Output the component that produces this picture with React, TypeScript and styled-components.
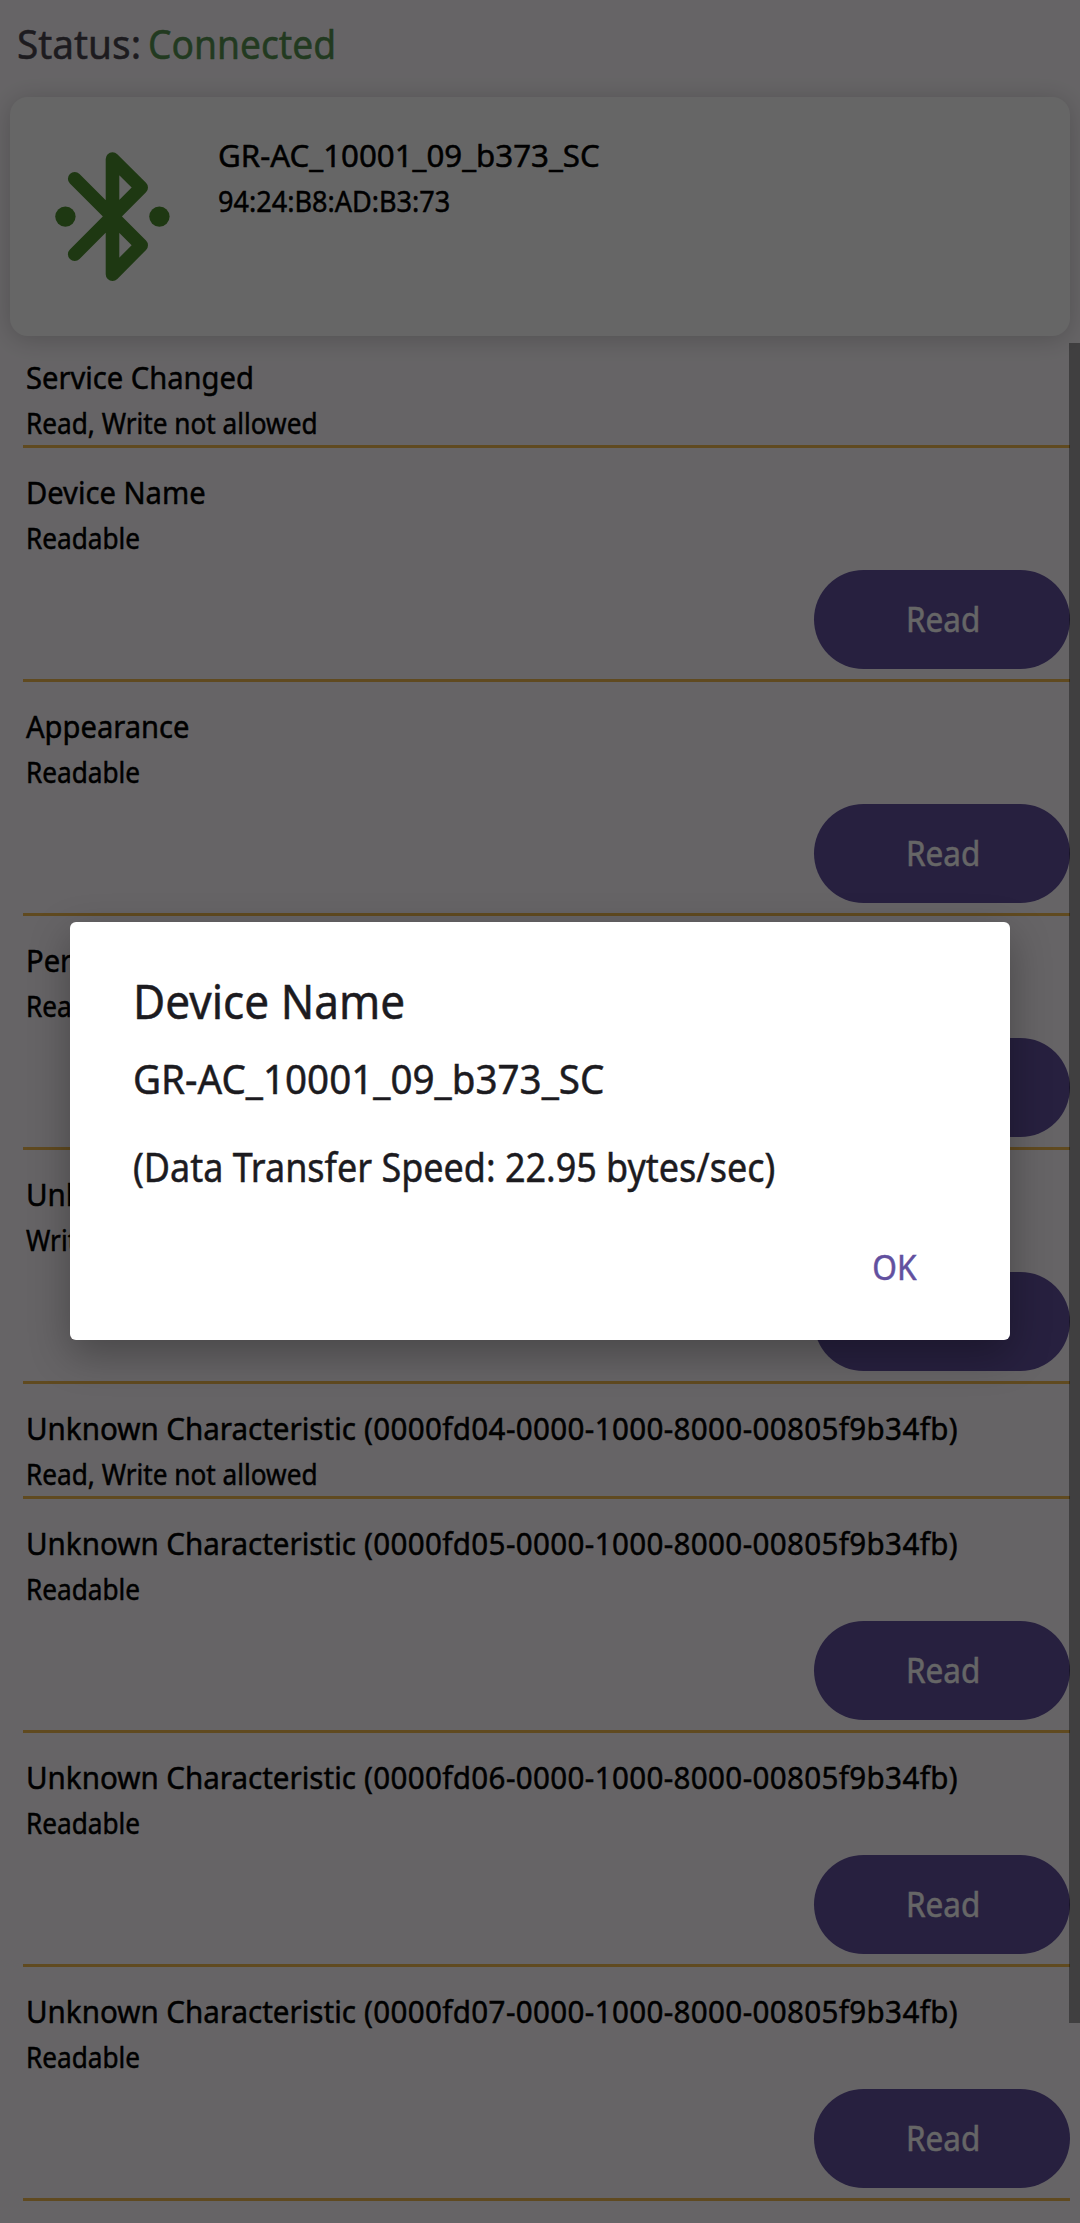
import React from 'react';
import styled, { createGlobalStyle } from 'styled-components';

const GlobalStyle = createGlobalStyle`
  *, *::before, *::after { box-sizing: border-box; }
  body { margin: 0; background: #fffbff; }
`;

const Screen = styled.div`
  position: relative;
  display: flex;
  flex-direction: column;
  width: 1080px;
  height: 2223px;
  overflow: hidden;
  background: #fffbff;
  font-family: 'Noto Sans', 'Open Sans', sans-serif;
  color: #000;
`;

const Fit = styled.span<{ $k: number; $origin?: string }>`
  display: inline-block;
  white-space: nowrap;
  transform: scaleX(${(p) => p.$k});
  transform-origin: ${(p) => p.$origin ?? 'left'} center;
  -webkit-text-stroke: 0.5px currentColor;
`;

const StatusBar = styled.header`
  display: flex;
  flex: none;
  gap: 3px;
  height: 97px;
  padding: 17px 0 0 17px;
  font-size: 40px;
  line-height: 54px;
  color: #49454f;
`;

const StatusValue = styled.span`
  color: #559150;
`;

const DeviceCard = styled.section`
  display: flex;
  flex: none;
  height: 239px;
  margin: 0 10px;
  border-radius: 18px;
  background: #fff;
  box-shadow: 0 3px 26px rgba(0, 0, 0, 0.2);
`;

const IconCell = styled.div`
  width: 208px;
  padding: 45px 0 0 40px;
`;

const BluetoothIcon = styled.svg`
  display: block;
  width: 125px;
  height: 150px;
`;

const TextBlock = styled.div`
  display: flex;
  flex-direction: column;
  gap: 4px;
`;

const CardText = styled(TextBlock)`
  padding-top: 35px;
`;

const Title = styled.div`
  height: 46px;
  font-size: 31px;
  line-height: 46px;
`;

const Uuid = styled.span`
  letter-spacing: 0.38px;
`;

const Subtitle = styled.div`
  height: 38px;
  font-size: 28.4px;
  line-height: 38px;
`;

const List = styled.main`
  display: flex;
  flex: none;
  flex-direction: column;
  margin: -3px 10px 0 23px;
`;

const Item = styled.article<{ $action: boolean }>`
  display: flex;
  flex-direction: column;
  padding: 21px 0 ${(p) => (p.$action ? 10 : 3)}px 3px;
  border-bottom: 3px solid #f0ba50;
`;

const ActionButton = styled.button`
  align-self: flex-end;
  width: 256px;
  height: 99px;
  margin-top: 13px;
  padding: 0 0 0 3px;
  border: 0;
  border-radius: 50px;
  background: #62509f;
  color: #fff;
  font-family: inherit;
  font-size: 34px;
  line-height: 99px;
  text-align: center;
`;

const ScrollThumb = styled.div`
  position: absolute;
  top: 343px;
  right: 0;
  width: 11px;
  height: 1680px;
  background: rgba(0, 0, 0, 0.37);
`;

const Scrim = styled.div`
  position: absolute;
  inset: 0;
  display: flex;
  justify-content: center;
  align-items: flex-start;
  padding-top: 922px;
  background: rgba(0, 0, 0, 0.6);
`;

const Dialog = styled.div`
  display: flex;
  flex-direction: column;
  width: 940px;
  height: 418px;
  padding: 47px 93px 0 63px;
  border-radius: 6px;
  background: #fff;
  color: #1c1b1f;
  box-shadow: 0 14px 40px rgba(0, 0, 0, 0.3);
`;

const DialogTitle = styled.h2`
  margin: 0 0 19px;
  font-size: 48px;
  font-weight: 400;
  line-height: 64px;
`;

const DialogBody = styled.div`
  display: flex;
  flex-direction: column;
  gap: 34px;
  font-size: 39.5px;
  line-height: 54px;
`;

const DialogAction = styled.button`
  align-self: flex-end;
  margin-top: 50px;
  padding: 0;
  border: 0;
  background: none;
  color: #62509f;
  font-family: inherit;
  font-size: 34px;
  line-height: 46px;
`;

type Characteristic = { name: string; uuid?: string; access: string; action?: string };

const uuid = (id: string) => `(0000${id}-0000-1000-8000-00805f9b34fb)`;

const items: Characteristic[] = [
  { name: 'Service Changed', access: 'Read, Write not allowed' },
  { name: 'Device Name', access: 'Readable', action: 'Read' },
  { name: 'Appearance', access: 'Readable', action: 'Read' },
  { name: 'Peripheral Preferred Connection Parameters', access: 'Readable', action: 'Read' },
  { name: 'Unknown Characteristic', uuid: uuid('fd03'), access: 'Writable', action: 'Write' },
  { name: 'Unknown Characteristic', uuid: uuid('fd04'), access: 'Read, Write not allowed' },
  { name: 'Unknown Characteristic', uuid: uuid('fd05'), access: 'Readable', action: 'Read' },
  { name: 'Unknown Characteristic', uuid: uuid('fd06'), access: 'Readable', action: 'Read' },
  { name: 'Unknown Characteristic', uuid: uuid('fd07'), access: 'Readable', action: 'Read' },
];

export default function App() {
  return (
    <Screen>
      <GlobalStyle />
      <StatusBar>
        <Fit $k={0.97}>Status:</Fit>
        <StatusValue>
          <Fit $k={0.93}>Connected</Fit>
        </StatusValue>
      </StatusBar>
      <DeviceCard>
        <IconCell>
          <BluetoothIcon viewBox="50 142 125 150" fill="none">
            <path
              d="M74.7 178.7 L141.2 245.2 L112.5 274.2 V159 L141.2 187.5 L74.7 254.2"
              stroke="#4b8c2d"
              strokeWidth="13.6"
              strokeLinecap="round"
              strokeLinejoin="round"
            />
            <circle cx="65.4" cy="216.6" r="10.2" fill="#4b8c2d" />
            <circle cx="159.4" cy="216.6" r="10.2" fill="#4b8c2d" />
          </BluetoothIcon>
        </IconCell>
        <CardText>
          <Title><Fit $k={1.008}>GR-AC_10001_09_b373_SC</Fit></Title>
          <Subtitle><Fit $k={0.953}>94:24:B8:AD:B3:73</Fit></Subtitle>
        </CardText>
      </DeviceCard>
      <List>
        {items.map((item) => (
          <Item key={item.name + (item.uuid ?? '')} $action={!!item.action}>
            <TextBlock>
              <Title>
                <Fit $k={item.uuid ? 0.953 : 0.94}>
                  {item.name}
                  {item.uuid && <Uuid> {item.uuid}</Uuid>}
                </Fit>
              </Title>
              <Subtitle><Fit $k={0.922}>{item.access}</Fit></Subtitle>
            </TextBlock>
            {item.action && (
              <ActionButton>
                <Fit $k={0.925} $origin="center">{item.action}</Fit>
              </ActionButton>
            )}
          </Item>
        ))}
      </List>
      <ScrollThumb />
      <Scrim>
        <Dialog role="dialog">
          <DialogTitle><Fit $k={0.92}>Device Name</Fit></DialogTitle>
          <DialogBody>
            <Fit $k={0.977}>GR-AC_10001_09_b373_SC</Fit>
            <Fit $k={0.91}>(Data Transfer Speed: 22.95 bytes/sec)</Fit>
          </DialogBody>
          <DialogAction><Fit $k={0.93} $origin="right">OK</Fit></DialogAction>
        </Dialog>
      </Scrim>
    </Screen>
  );
}
